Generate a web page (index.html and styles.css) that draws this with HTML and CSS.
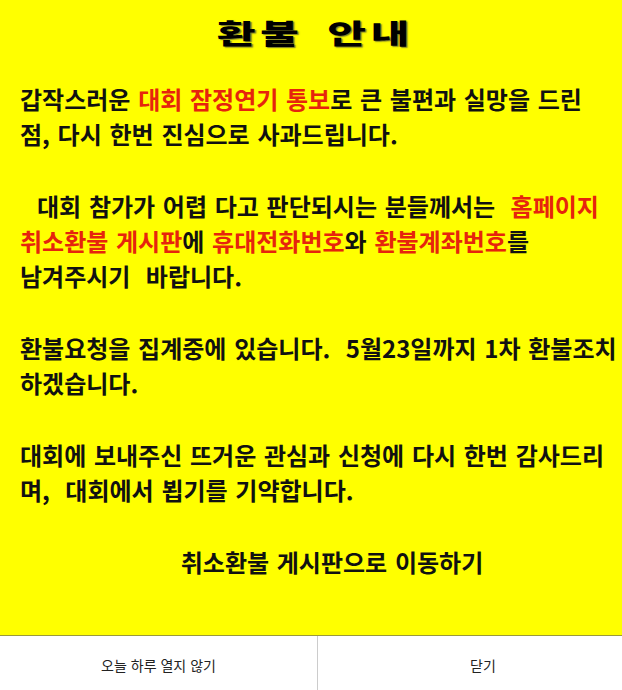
FILE: index.html
```html
<!DOCTYPE html>
<html lang="ko">
<head>
<meta charset="utf-8">
<title>환불 안내</title>
<link rel="stylesheet" href="styles.css">
</head>
<body>
<div class="popup">
  <div class="notice">
    <h1 class="title"><span class="title-text">환불 안내</span></h1>
    <div class="text">
      <p class="para">갑작스러운 <span class="red">대회 잠정연기 통보</span>로 큰 불편과 실망을 드린<br>점, 다시 한번 진심으로 사과드립니다.</p>
      <p class="para indent">대회 참가가 어렵 다고 판단되시는 분들께서는&nbsp; <span class="red">홈페이지</span><br><span class="red">취소환불 게시판</span>에 <span class="red">휴대전화번호</span>와 <span class="red">환불계좌번호</span>를<br>남겨주시기&nbsp; 바랍니다.</p>
      <p class="para">환불요청을 집계중에 있습니다.&nbsp; 5월23일까지 1차 환불조치<br>하겠습니다.</p>
      <p class="para">대회에 보내주신 뜨거운 관심과 신청에 다시 한번 감사드리<br>며,&nbsp; 대회에서 뵙기를 기약합니다.</p>
      <p class="para link">취소환불 게시판으로 이동하기</p>
    </div>
  </div>
  <div class="bar">
    <button class="bar-btn">오늘 하루 열지 않기</button>
    <button class="bar-btn close">닫기</button>
  </div>
</div>
</body>
</html>
```
FILE: styles.css
```css
html, body {
  margin: 0;
  padding: 0;
  background: #ffffff;
}

.popup {
  width: 622px;
  height: 690px;
  display: flex;
  flex-direction: column;
  overflow: hidden;
  font-family: "Noto Sans CJK KR", "Noto Sans", sans-serif;
}

.notice {
  height: 636px;
  flex: none;
  background: #ffff00;
  border-bottom: 1px solid #9a9a3a;
  box-sizing: border-box;
  padding-top: 15px;
  overflow: hidden;
}

.title {
  margin: 0;
  height: 35px;
  line-height: 35px;
  text-align: center;
  font-size: 27px;
  font-weight: 900;
  color: #000;
  padding-left: 8px;
}

.title-text {
  display: inline-block;
  transform: scaleX(1.55);
  letter-spacing: 3px;
  word-spacing: 5px;
  text-shadow: 1px 1px 1px rgba(60, 60, 60, 0.7);
}

.text {
  width: 602px;
  margin: 31px 0 0 20px;
  font-size: 24px;
  font-weight: 700;
  line-height: 35px;
  color: #111;
  word-spacing: 1px;
  white-space: nowrap;
}

.para {
  margin: 0 0 37px 0;
}

.indent {
  text-indent: 17px;
}

.red {
  color: #e6240d;
}

.link {
  text-align: center;
  padding-left: 22px;
}

.bar {
  flex: 1;
  display: flex;
  background: #ffffff;
}

.bar-btn {
  flex: 0 0 318px;
  border: 0;
  border-right: 1px solid #cccccc;
  background: #ffffff;
  font-family: "Noto Sans CJK KR", "Noto Sans", sans-serif;
  font-size: 14px;
  color: #222;
  padding: 4px 0 0 0;
  margin: 0;
  cursor: pointer;
}

.bar-btn.close {
  flex: 1;
  border-right: 0;
  padding-left: 26px;
}
```
